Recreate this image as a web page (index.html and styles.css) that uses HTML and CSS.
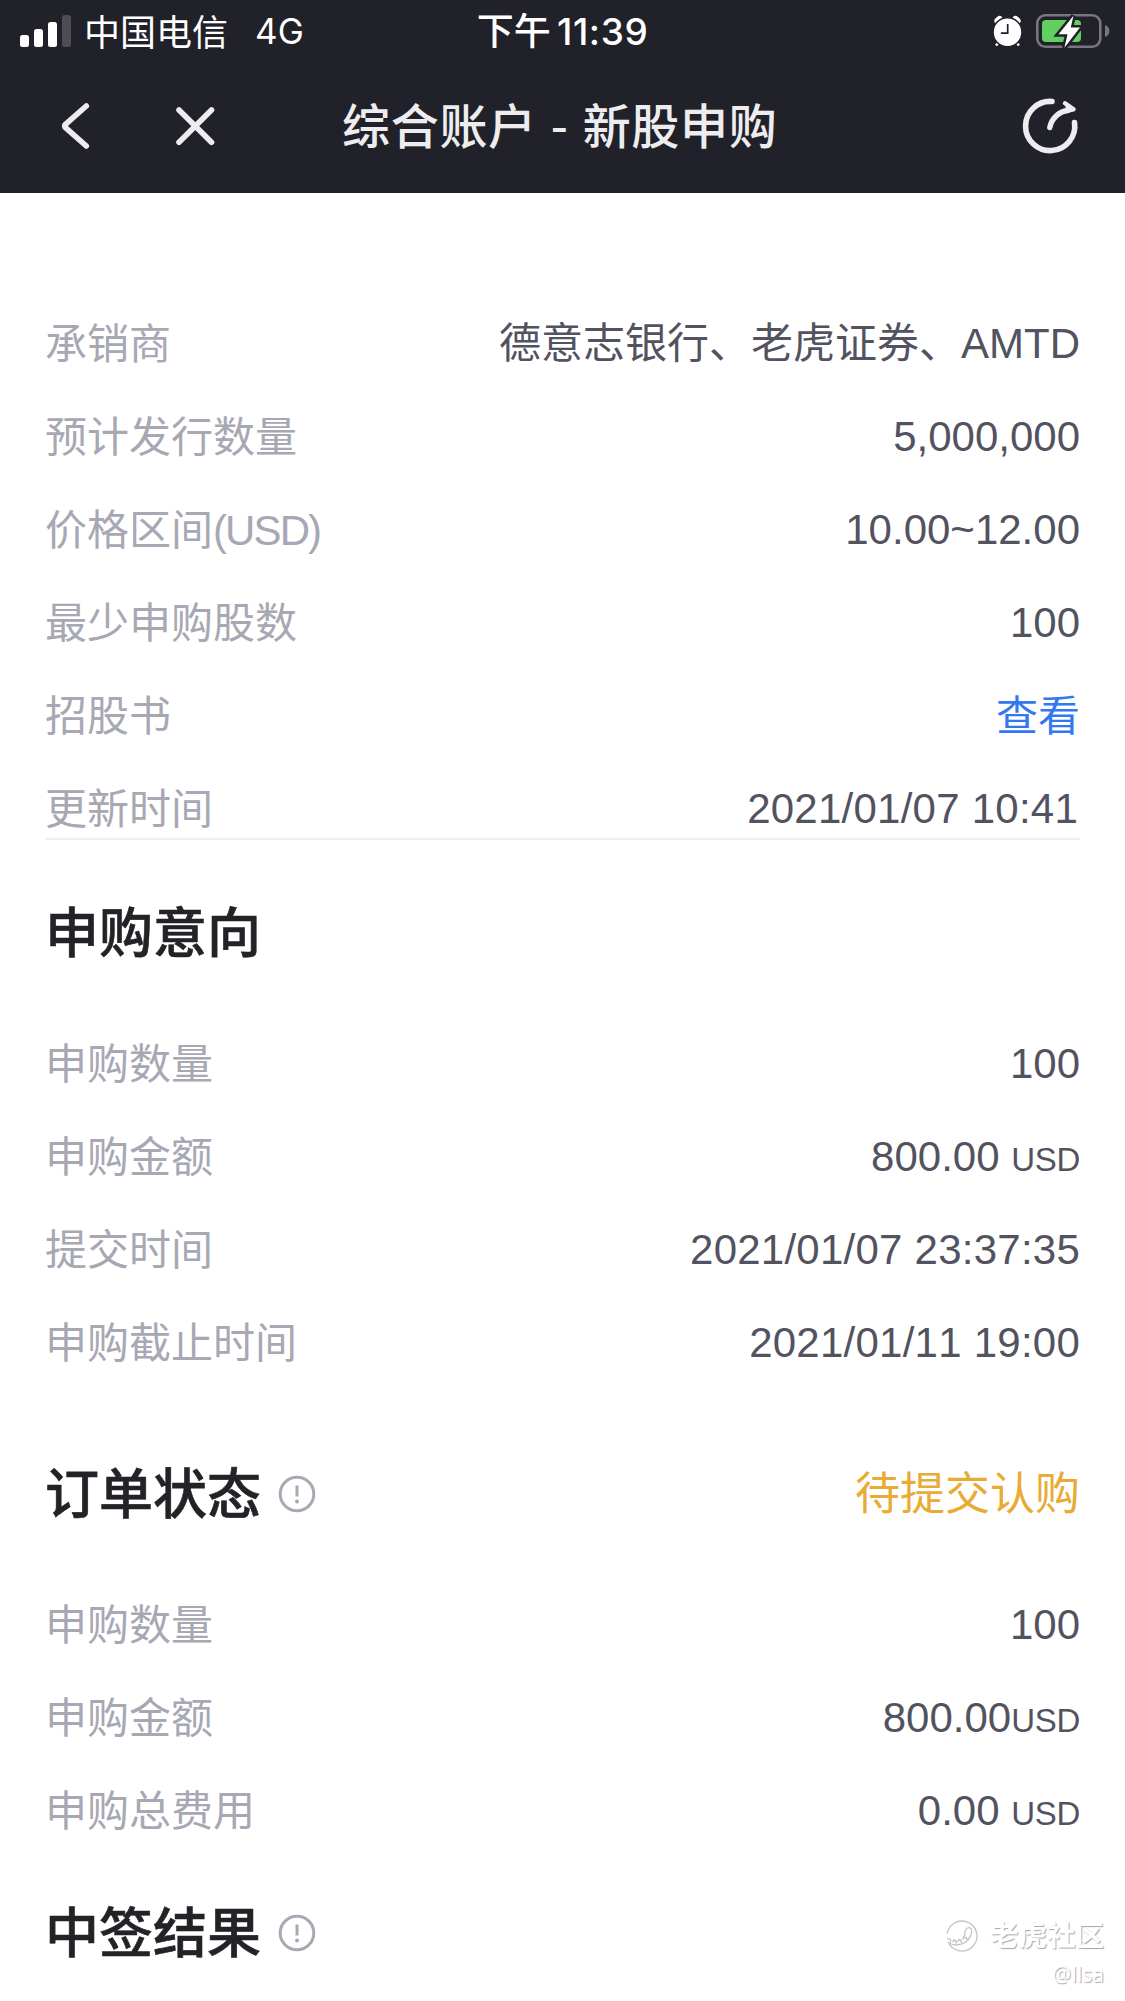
FILE: index.html
```html
<!DOCTYPE html>
<html lang="zh-CN">
<head>
<meta charset="utf-8">
<title>综合账户 - 新股申购</title>
<link rel="stylesheet" href="styles.css">
</head>
<body>
<header class="header">
  <div class="status">
    <div class="status-left">
      <svg class="signal" width="52" height="32" viewBox="0 0 52 32" fill="#fff">
        <rect x="0" y="20" width="9" height="12" rx="2.5"/>
        <rect x="14" y="14" width="9" height="18" rx="2.5"/>
        <rect x="28" y="7" width="9" height="25" rx="2.5"/>
        <rect x="42" y="0" width="9" height="32" rx="2.5" fill="#4e4d56"/>
      </svg>
      <span class="carrier">中国电信</span>
      <span class="network">4G</span>
    </div>
    <div class="clock">下午 <span class="digits">11:39</span></div>
    <svg class="status-right" width="118" height="38" viewBox="992 11 118 38">
      <g fill="#fff">
        <ellipse cx="998.5" cy="19" rx="4.5" ry="3.4" transform="rotate(-40 998.5 19)"/>
        <ellipse cx="1016.5" cy="19" rx="4.5" ry="3.4" transform="rotate(40 1016.5 19)"/>
      </g>
      <path d="M1000 40l-4 4.5M1015 40l4 4.5" stroke="#fff" stroke-width="2.6"/>
      <circle cx="1007.5" cy="31.3" r="14.5" fill="#fff" stroke="#212129" stroke-width="1.6"/>
      <path d="M1007.7 23v9.2h-6.8" fill="none" stroke="#212129" stroke-width="1.7"/>
      <rect x="1037.3" y="14.3" width="63" height="31.4" rx="8" fill="none" stroke="#77777c" stroke-width="2.6"/>
      <path d="M1105 24c6 2 6 10 0 12z" fill="#77777c"/>
      <rect x="1042" y="19" width="39" height="22" rx="4" fill="#62cf62"/>
      <path d="M1073.5 14.7L1058.5 33.2h9L1064.4 46.7L1080 26.5h-9.2z" fill="#fff" stroke="#212129" stroke-width="5" paint-order="stroke"/>
    </svg>
  </div>
  <nav class="nav">
    <svg class="nav-left" width="160" height="60" viewBox="60 96 160 60" fill="none" stroke="#ededf0" stroke-width="5.6" stroke-linecap="round" stroke-linejoin="round">
      <path d="M86.3 106L65.5 124.3Q63.8 126 65.5 127.7L86.3 146"/>
      <path d="M179 110L211.5 142.2M211.5 110L179 142.2"/>
    </svg>
    <h1 class="nav-title">综合账户 - 新股申购</h1>
    <svg class="nav-right" width="60" height="60" viewBox="1020 96 60 60" fill="none" stroke="#ededf0" stroke-width="5.6" stroke-linecap="round" stroke-linejoin="round">
      <path d="M1052 101.5A24.6 24.6 0 1 0 1074.5 122.5"/>
      <path d="M1049.8 127.5C1051.5 118.5 1059 111.5 1067.5 110.5" stroke-width="5.4"/>
      <path d="M1065 103.3L1073.6 109.3L1066 111" stroke-width="4.4" fill="#ededf0"/>
    </svg>
  </nav>
</header>

<main class="content">
  <dl class="list list-divided">
    <div class="row"><dt>承销商</dt><dd>德意志银行、老虎证券、AMTD</dd></div>
    <div class="row"><dt>预计发行数量</dt><dd>5,000,000</dd></div>
    <div class="row"><dt>价格区间<span class="unit">(USD)</span></dt><dd>10.00~12.00</dd></div>
    <div class="row"><dt>最少申购股数</dt><dd>100</dd></div>
    <div class="row"><dt>招股书</dt><dd class="link">查看</dd></div>
    <div class="row"><dt>更新时间</dt><dd class="date updated">2021/01/07 10:41</dd></div>
  </dl>

  <section class="section">
    <div class="section-head"><h2>申购意向</h2></div>
    <dl class="list">
      <div class="row"><dt>申购数量</dt><dd>100</dd></div>
      <div class="row"><dt>申购金额</dt><dd>800.00 <small>USD</small></dd></div>
      <div class="row"><dt>提交时间</dt><dd class="date">2021/01/07 23:37:35</dd></div>
      <div class="row"><dt>申购截止时间</dt><dd class="date">2021/01/11 19:00</dd></div>
    </dl>
  </section>

  <section class="section section-order">
    <div class="section-head">
      <h2>订单状态</h2>
      <svg class="info" width="38" height="38" viewBox="0 0 38 38" fill="none" stroke="#a9a9b3" stroke-width="3">
        <circle cx="19" cy="19" r="16.8"/><path d="M19 10.5v11"/><circle cx="19" cy="26.5" r="2" fill="#a9a9b3" stroke="none"/>
      </svg>
      <span class="state">待提交认购</span>
    </div>
    <dl class="list">
      <div class="row"><dt>申购数量</dt><dd>100</dd></div>
      <div class="row"><dt>申购金额</dt><dd>800.00<small>USD</small></dd></div>
      <div class="row"><dt>申购总费用</dt><dd>0.00 <small>USD</small></dd></div>
    </dl>
  </section>

  <section class="section section-result">
    <div class="section-head">
      <h2>中签结果</h2>
      <svg class="info" width="38" height="38" viewBox="0 0 38 38" fill="none" stroke="#a9a9b3" stroke-width="3">
        <circle cx="19" cy="19" r="16.8"/><path d="M19 10.5v11"/><circle cx="19" cy="26.5" r="2" fill="#a9a9b3" stroke="none"/>
      </svg>
    </div>
  </section>
</main>

<div class="watermark">
  <div class="brand">
    <svg width="34" height="34" viewBox="0 0 34 34" fill="none" stroke="#c3c4c8" stroke-width="1.3" stroke-linecap="round">
      <path d="M2.3 14A15 15 0 1 1 3.2 23"/>
      <path d="M2.5 19.5l3 1.2v2.5M5 24.5C12 28 23 25 26 15.5C28.5 9 23.5 6.5 20.5 11C19 14.5 21 15.5 18.5 18"/>
      <path d="M8 22.5q2-3.5 3.5 1.5M13 22q2-3.5 3.5 1M18 20q2-3.5 4 0" stroke-width="1.6"/>
    </svg>
    <span>老虎社区</span>
  </div>
  <div class="user">@Ilsa</div>
</div>
</body>
</html>
```
FILE: styles.css
```css
* { box-sizing: border-box; margin: 0; padding: 0; }

body {
  position: relative;
  width: 1125px;
  height: 2001px;
  overflow: hidden;
  background: #fff;
  color: #52535f;
  font-family: "Liberation Sans", "Noto Sans CJK SC", sans-serif;
  font-size: 42px;
}

.header {
  height: 193px;
  background: #212129;
  color: #fff;
}

.status {
  display: grid;
  grid-template-columns: 1fr auto 1fr;
  align-items: center;
  height: 62px;
  padding: 0 15px 0 20px;
}
.status-left { display: flex; align-items: center; font-size: 36px; }
.signal { margin-right: 12px; }
.carrier { padding-bottom: 3px; }
.network { margin-left: 27px; font-family: Inter, sans-serif; font-size: 35px; }
.clock { padding: 0 5px 5px 0; font-size: 37px; font-weight: 500; }
.digits { margin-left: -4px; font-family: Inter, sans-serif; font-size: 37px; font-weight: 500; letter-spacing: 0.6px; }
.status-right { justify-self: end; }

.nav {
  display: grid;
  grid-template-columns: 160px 1fr 60px;
  align-items: center;
  height: 128px;
  padding: 0 45px 0 60px;
  color: #ededf0;
}
.nav-title {
  padding: 0 0 7px 122px;
  font-family: "Noto Sans CJK SC", sans-serif;
  font-size: 48px;
  font-weight: 500;
  letter-spacing: 0.7px;
  word-spacing: 2.5px;
  line-height: 60px;
  white-space: nowrap;
}
.nav-right { justify-self: end; }

.content { padding: 120px 45px 0; }

.list { display: flex; flex-direction: column; gap: 32px; }
.list-divided { height: 527px; border-bottom: 2px solid #efeff0; }
.row {
  display: flex;
  flex: none;
  justify-content: space-between;
  height: 61px;
  line-height: 61px;
  white-space: nowrap;
}
.list-divided .row:last-child { height: 60px; }
.row dt { padding-top: 1px; color: #a7a8b3; }
.row small { font-size: 33px; letter-spacing: -0.3px; }
.unit { letter-spacing: -1.9px; }
.link { padding-top: 1px; color: #3478f0; }
.date { letter-spacing: 0.24px; font-kerning: none; }
.updated { margin-right: 2px; }

.section { padding-top: 53px; }
.section-order { padding-top: 81px; }
.section-result { padding-top: 52px; }
.section-head {
  display: flex;
  align-items: center;
  height: 80px;
  margin-bottom: 60px;
}
.section-head h2 {
  padding-top: 2px;
  color: #232327;
  font-size: 54px;
  font-weight: 500;
  line-height: 80px;
  -webkit-text-stroke: 0.6px #232327;
}
.info { margin-left: 17px; }
.state { margin-left: auto; padding-bottom: 7px; color: #e8ab35; font-size: 45px; }

/* Community stamp laid over the page corner */
.watermark {
  position: absolute;
  right: 21px;
  bottom: 6px;
  display: flex;
  flex-direction: column;
  align-items: flex-end;
  color: #fff;
  text-shadow: 1px 1px 1px #a5a6ac;
}
.brand { display: flex; align-items: center; gap: 11px; font-size: 28.5px; font-weight: 700; line-height: 34px; }
.user { font-family: "Open Sans", sans-serif; font-size: 21px; line-height: 42px; }
```
